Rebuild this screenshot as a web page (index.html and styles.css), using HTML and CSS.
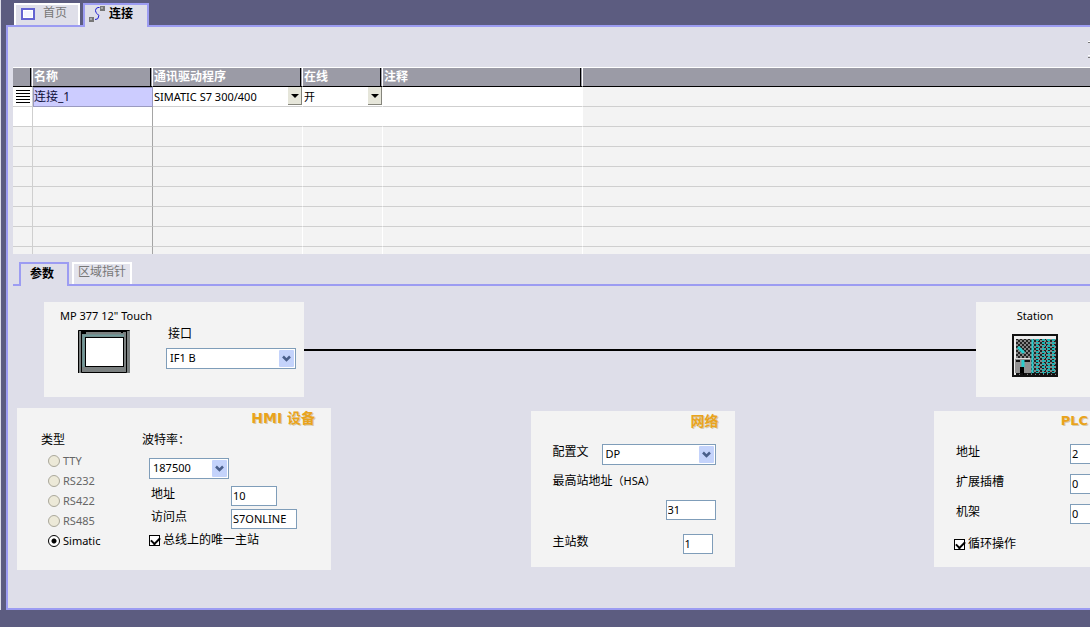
FILE: index.html
```
<!DOCTYPE html>
<html lang="zh-CN">
<head>
<meta charset="utf-8">
<title>连接</title>
<link rel="stylesheet" href="styles.css">
</head>
<body>
<div class="frame">
  <nav class="tabs">
    <button class="tab" type="button">
      <svg class="tab-icon" width="16" height="16" viewBox="0 0 16 16"><rect x="2" y="4" width="12" height="10" fill="#fff" stroke="#6464d2" stroke-width="2"/><rect x="4" y="6" width="8" height="6" fill="#f4f6ff"/></svg>
      <span>首页</span>
    </button>
    <button class="tab tab-active" type="button">
      <svg class="tab-icon" width="18" height="18" viewBox="0 0 18 18"><rect x="0" y="12" width="5" height="5" fill="#777"/><rect x="1" y="13" width="2" height="2" fill="#aaa"/><rect x="11" y="1" width="5" height="5" fill="#777"/><rect x="12" y="2" width="2" height="2" fill="#aaa"/><path d="M10.500 2.500H9Q6.500 3 6.500 5.500T8.500 9T9.500 12Q9.500 14.500 6 14.500" fill="none" stroke="#1c1cd0"/></svg>
      <span>连接</span>
    </button>
  </nav>
  <main class="editor">
    <div class="toolbar">
      <svg width="2" height="22" viewBox="0 0 2 22"><path d="M0 5.500H2M0 20.500H2" stroke="#777"/><path d="M0 4.500H2M0 18.500H2" stroke="#fff"/></svg>
    </div>
    <div class="table-area">
    <table class="grid">
      <colgroup><col class="c-mark"><col class="c-name"><col class="c-driver"><col class="c-online"><col class="c-note"><col></colgroup>
      <thead><tr><th></th><th>名称</th><th>通讯驱动程序</th><th>在线</th><th>注释</th><th></th></tr></thead>
      <tbody>
        <tr class="filled">
          <td><svg class="marker" width="14" height="14" viewBox="0 0 14 14"><path d="M0 .5H14M0 3.500H14M0 6.500H14M0 9.500H14M0 12.500H14" stroke="#000"/></svg></td>
          <td class="selected">连接_1</td>
          <td><div class="cell-select"><select aria-label="通讯驱动程序"><option>SIMATIC S7 300/400</option></select><svg class="cell-arrow" viewBox="0 0 14 18"><path d="M3 7H11L7 11Z"/></svg></div></td>
          <td><div class="cell-select"><select aria-label="在线"><option>开</option></select><svg class="cell-arrow" viewBox="0 0 14 18"><path d="M3 7H11L7 11Z"/></svg></div></td>
          <td></td><td></td>
        </tr>
        <tr class="filled"><td></td><td></td><td></td><td></td><td></td><td></td></tr>
        <tr><td></td><td></td><td></td><td></td><td></td><td></td></tr>
        <tr><td></td><td></td><td></td><td></td><td></td><td></td></tr>
        <tr><td></td><td></td><td></td><td></td><td></td><td></td></tr>
        <tr><td></td><td></td><td></td><td></td><td></td><td></td></tr>
        <tr><td></td><td></td><td></td><td></td><td></td><td></td></tr>
        <tr><td></td><td></td><td></td><td></td><td></td><td></td></tr>
        <tr class="partial"><td></td><td></td><td></td><td></td><td></td><td></td></tr>
      </tbody>
    </table>
    </div>
    <nav class="subtabs">
      <button class="subtab subtab-active" type="button">参数</button>
      <button class="subtab" type="button">区域指针</button>
    </nav>
    <section class="params">
      <div class="diagram">
        <div class="device">
          <div class="device-info">
            <span>MP 377 12" Touch</span>
            <svg width="52" height="43" viewBox="0 0 52 43"><rect width="52" height="43" fill="#7b8080"/><path d="M.5 43V.5H51.500" fill="none" stroke="#000"/><path d="M3.500 1V42.500H48.500V1" fill="none" stroke="#000"/><path d="M4 1.500H48" stroke="#000"/><rect x="3" y="2" width="5" height="2"/><rect x="43" y="2" width="2" height="1"/><rect x="7.500" y="7.500" width="38" height="29" fill="#fff" stroke="#000"/><path d="M5.500 37V5.500H46" fill="none" stroke="#6f9a9a" stroke-width="2"/></svg>
          </div>
          <div class="device-port">
            <label for="port">接口</label>
            <div class="combo"><select id="port"><option>IF1 B</option></select><svg class="combo-arrow" viewBox="0 0 15 17"><rect width="15" height="17" rx="1" fill="#c4d3fb"/><path d="M4 6.500L7.500 10L11 6.500" fill="none" stroke="#4a5f8a" stroke-width="2.500"/></svg></div>
          </div>
        </div>
        <div class="wire"></div>
        <div class="station">
          <span>Station</span>
          <svg width="46" height="43" viewBox="0 0 46 43">
            <defs>
              <pattern id="mesh" width="4" height="4" patternUnits="userSpaceOnUse"><rect width="4" height="4" fill="#858585"/><path d="M0 0H2V2H0ZM2 2H4V4H2Z" fill="#222"/></pattern>
            </defs>
            <rect x="1" y="1" width="44" height="41" fill="#ededed" stroke="#111" stroke-width="2"/>
            <rect x="4" y="5" width="40" height="36" fill="url(#mesh)"/>
            <rect x="3" y="25" width="16" height="14" fill="#929292"/>
            <path d="M3 24.500H18" stroke="#ddd"/>
            <path d="M4 27H8M12 27H18" stroke="#111" stroke-width="2"/>
            <path d="M6 13L12 19" stroke="#29cdcd" stroke-width="3"/>
            <path d="M11 26V34" stroke="#29cdcd" stroke-width="3"/>
            <path d="M8 33H12V41H8Z"/>
            <path d="M20.500 5V40" stroke="#29cdcd" stroke-width="2"/>
            <path d="M25.500 5V40M31.500 5V40M36.500 5V40M41.500 5V40" stroke="#1fb4b4" stroke-width="3" stroke-dasharray="2 1"/>
            <path d="M4 40H44" stroke="#111" stroke-width="2" stroke-dasharray="3 1"/>
          </svg>
        </div>
      </div>
      <div class="groups">
        <fieldset class="group group-hmi">
          <h2 class="group-title">HMI 设备</h2>
          <div class="hmi-columns">
            <div class="types">
              <span class="caption">类型</span>
              <label class="radio"><input type="radio" name="type" disabled>TTY</label>
              <label class="radio"><input type="radio" name="type" disabled>RS232</label>
              <label class="radio"><input type="radio" name="type" disabled>RS422</label>
              <label class="radio"><input type="radio" name="type" disabled>RS485</label>
              <label class="radio"><input type="radio" name="type" checked>Simatic</label>
            </div>
            <div class="settings">
              <label class="caption" for="baud">波特率：</label>
              <div class="combo combo-baud"><select id="baud"><option>187500</option></select><svg class="combo-arrow" viewBox="0 0 15 17"><rect width="15" height="17" rx="1" fill="#c4d3fb"/><path d="M4 6.500L7.500 10L11 6.500" fill="none" stroke="#4a5f8a" stroke-width="2.500"/></svg></div>
              <div class="pair"><label for="hmi-addr">地址</label><input class="text w-46" id="hmi-addr" type="text" value="10"></div>
              <div class="pair"><label for="access">访问点</label><input class="text w-66" id="access" type="text" value="S7ONLINE"></div>
              <label class="check"><input type="checkbox" checked>总线上的唯一主站</label>
            </div>
          </div>
        </fieldset>
        <fieldset class="group group-net">
          <h2 class="group-title">网络</h2>
          <div class="net-body">
            <div class="net-row"><label for="profile">配置文</label><div class="combo combo-profile"><select id="profile"><option>DP</option></select><svg class="combo-arrow" viewBox="0 0 15 17"><rect width="15" height="17" rx="1" fill="#c4d3fb"/><path d="M4 6.500L7.500 10L11 6.500" fill="none" stroke="#4a5f8a" stroke-width="2.500"/></svg></div></div>
            <label class="hsa-label" for="hsa">最高站地址<span>（HSA）</span></label>
            <input class="text w-50 hsa" id="hsa" type="text" value="31">
            <div class="net-row masters"><label for="masters">主站数</label><input class="text w-30" id="masters" type="text" value="1"></div>
          </div>
        </fieldset>
        <fieldset class="group group-plc">
          <h2 class="group-title">PLC</h2>
          <div class="plc-body">
            <div class="plc-row"><label for="plc-addr">地址</label><input class="text w-30" id="plc-addr" type="text" value="2"></div>
            <div class="plc-row"><label for="slot">扩展插槽</label><input class="text w-30" id="slot" type="text" value="0"></div>
            <div class="plc-row"><label for="rack">机架</label><input class="text w-30" id="rack" type="text" value="0"></div>
            <label class="check"><input type="checkbox" checked>循环操作</label>
          </div>
        </fieldset>
      </div>
    </section>
  </main>
</div>
</body>
</html>
```
FILE: styles.css
```
* { box-sizing: border-box; }
body {
  margin: 0;
  min-height: 100vh;
  padding-bottom: 17px;
  display: flex;
  flex-direction: column;
  overflow-x: hidden;
  background: #5c5c80;
  color: #000;
  font: 12px/16px "Noto Sans", "Noto Sans CJK SC", sans-serif;
}
button, select, input { font: inherit; color: inherit; }
svg { display: block; flex: none; }

.frame {
  flex: 1;
  display: flex;
  flex-direction: column;
  padding-left: 5px;
  border-left: 1px solid #dcdce8;
}
.tabs { display: flex; gap: 3px; height: 25px; padding: 3px 0 0 8px; }
.tab {
  display: flex;
  align-items: flex-start;
  gap: 7px;
  width: 66px;
  height: 22px;
  padding: 0 4px;
  border: 2px solid #fff;
  border-bottom: 0;
  background: #dfdfe9;
  color: #777;
  white-space: nowrap;
}
.tab-active {
  z-index: 1;
  height: 24px;
  gap: 2px;
  border-color: #9c9cf2;
  background: #dedee9;
  color: #000;
  font-weight: bold;
}
.tab-active span { padding-top: 1px; }

.editor {
  flex: 1;
  padding-left: 5px;
  border: 2px solid #9c9cf2;
  border-right: 0;
  background: #dedee9;
}
.toolbar { display: flex; justify-content: flex-end; height: 40px; padding-top: 10px; }

.table-area { overflow: hidden; }
.grid { width: 100%; table-layout: fixed; border-spacing: 0; background: #f3f3f3; }
.c-mark { width: 20px; }
.c-name { width: 120px; }
.c-driver { width: 150px; }
.c-online { width: 80px; }
.c-note { width: 200px; }
.grid th {
  height: 20px;
  padding: 0 1px 1px;
  border-top: 1px solid #fff;
  border-right: 1px solid #fff;
  border-bottom: 1px solid #000;
  box-shadow: inset -1px 0 #9b9ba6, inset -2px 0 #000;
  background: #9b9ba6;
  color: #fff;
  text-align: left;
  line-height: 16px;
}
.grid th:last-child { border-right: 0; box-shadow: none; }
.grid td {
  height: 20px;
  padding: 0 0 0 1px;
  border-right: 1px solid #fff;
  border-bottom: 1px solid #cfcfcf;
  line-height: 18px;
}
.grid td:nth-child(1) { border-right-color: #cfcfcf; }
.grid td:nth-child(2) { border-right-color: #a5a5a5; }
.grid td:last-child { border-right: 0; }
.grid .filled td:not(:last-child) { background: #fff; }
.grid .filled .selected:not(:last-child) {
  border: 1px solid #9a9ac0;
  background: #ccccff;
  padding: 0;
  color: #10103a;
}
.grid .partial td { height: 7px; border-bottom: 0; }
.marker { margin-left: 2px; }
.cell-select { position: relative; font-size: 11px; }
.cell-select select {
  display: block;
  width: 100%;
  height: 19px;
  padding: 0;
  border: 0;
  background: #fff;
  appearance: none;
}
.cell-arrow {
  position: absolute;
  top: 0;
  right: 0;
  width: 14px;
  height: 18px;
  background: #e6e6da;
  box-shadow: inset -1px -1px #85857c;
  pointer-events: none;
}

.subtabs {
  display: flex;
  gap: 3px;
  margin-top: 8px;
  height: 24px;
  padding-left: 6px;
  border-bottom: 2px solid #9c9cf2;
}
.subtab {
  height: 22px;
  width: 60px;
  padding: 0 0 4px;
  border: 2px solid #fff;
  border-bottom: 0;
  background: #e3e3ec;
  color: #777;
  white-space: nowrap;
}
.subtab-active {
  z-index: 1;
  width: 50px;
  height: 24px;
  padding: 0 4px 2px 0;
  border-color: #9c9cf2;
  background: #dedee9;
  color: #000;
  font-weight: bold;
}

.params { padding-top: 16px; }
.diagram { display: flex; align-items: center; padding-left: 31px; font-size: 11px; }
.device {
  display: flex;
  gap: 19px;
  width: 260px;
  padding: 6px 8px 24px 16px;
  background: #f3f3f3;
}
.device-info { display: flex; flex-direction: column; gap: 6px; width: 87px; white-space: nowrap; }
.device-info svg { margin-left: 18px; }
.device-port { flex: 1; padding-top: 18px; }
.device-port label { display: block; padding: 0 0 6px 2px; font-size: 12px; }
.wire { flex: 1; height: 2px; background: #000; }
.station {
  display: flex;
  flex-direction: column;
  align-items: center;
  gap: 10px;
  width: 114px;
  padding: 6px 0 20px 4px;
  background: #f3f3f3;
}

.combo { position: relative; font-size: 11px; }
.combo select {
  display: block;
  width: 100%;
  height: 21px;
  padding: 0 20px 2px 3px;
  border: 1px solid #7f9db9;
  border-radius: 0;
  background: #fff;
  appearance: none;
}
.combo-arrow { position: absolute; top: 2px; right: 2px; width: 15px; height: 17px; pointer-events: none; }

.text {
  height: 20px;
  padding: 0 1px 1px;
  border: 1px solid #7f9db9;
  border-radius: 0;
  background: #fff;
  font-size: 11px;
}
.w-30 { width: 30px; }
.w-46 { width: 46px; }
.w-50 { width: 50px; }
.w-66 { width: 66px; }

.groups {
  display: flex;
  justify-content: space-between;
  align-items: center;
  padding: 11px 0 0 4px;
}
.group { min-width: 0; margin: 0; padding: 0; border: 0; background: #f3f3f3; }
.group-title {
  margin: 0;
  height: 22px;
  padding-right: 16px;
  color: #e9a31c;
  font: bold 14px/20px "DejaVu Sans", "Noto Sans CJK SC", sans-serif;
  text-align: right;
  text-shadow: 1px 1px #d8cba8;
}
.group-hmi { width: 314px; padding: 0 0 19px 24px; }
.hmi-columns { display: flex; }
.types { width: 101px; }
.caption { display: block; height: 21px; line-height: 20px; }
.radio { display: flex; align-items: center; gap: 3px; height: 20px; padding-left: 7px; font-size: 11px; }
.radio:has(:disabled) { color: #666; }
.radio input {
  appearance: none;
  width: 12px;
  height: 12px;
  margin: 0;
  border: 1px solid #000;
  border-radius: 50%;
  background: radial-gradient(circle, #000 0 2px, #fff 3px);
}
.radio input:disabled { border-color: #aaa89a; background: #ece9d8; }
.combo-baud { width: 80px; margin: 7px 0 7px 7px; }
.pair { display: flex; margin: 0 0 3px 9px; line-height: 16px; }
.pair label { width: 80px; }
.check { display: flex; align-items: center; gap: 3px; height: 20px; }
.check input {
  appearance: none;
  position: relative;
  width: 11px;
  height: 11px;
  margin: 0;
  border: 1px solid #000;
  background: #fff;
}
.check input::after {
  content: "";
  position: absolute;
  left: 1px;
  top: 1px;
  width: 7px;
  height: 4px;
  border: solid #000;
  border-width: 0 0 2px 2px;
  transform: rotate(-45deg);
}
.settings .check { margin: -2px 0 0 7px; }

.group-net { width: 204px; }
.net-body { display: flex; flex-direction: column; padding: 11px 19px 13px 22px; }
.net-row { display: flex; justify-content: space-between; line-height: 16px; }
.combo-profile { width: 114px; }
.hsa-label { height: 20px; margin-top: 6px; line-height: 20px; white-space: nowrap; }
.hsa-label span { font-size: 11px; }
.hsa { align-self: flex-end; margin: 9px 0 14px; }
.masters { padding-right: 3px; }

.group-plc { width: 156px; overflow: hidden; }
.group-plc .group-title { padding-right: 2px; font-size: 13px; }
.plc-body { display: flex; flex-direction: column; gap: 10px; padding: 11px 0 13px 22px; }
.plc-row { display: flex; line-height: 16px; }
.plc-row label { flex: none; width: 114px; }
.plc-row .text { flex: none; }
.plc-body .check { margin-left: -2px; }
```
